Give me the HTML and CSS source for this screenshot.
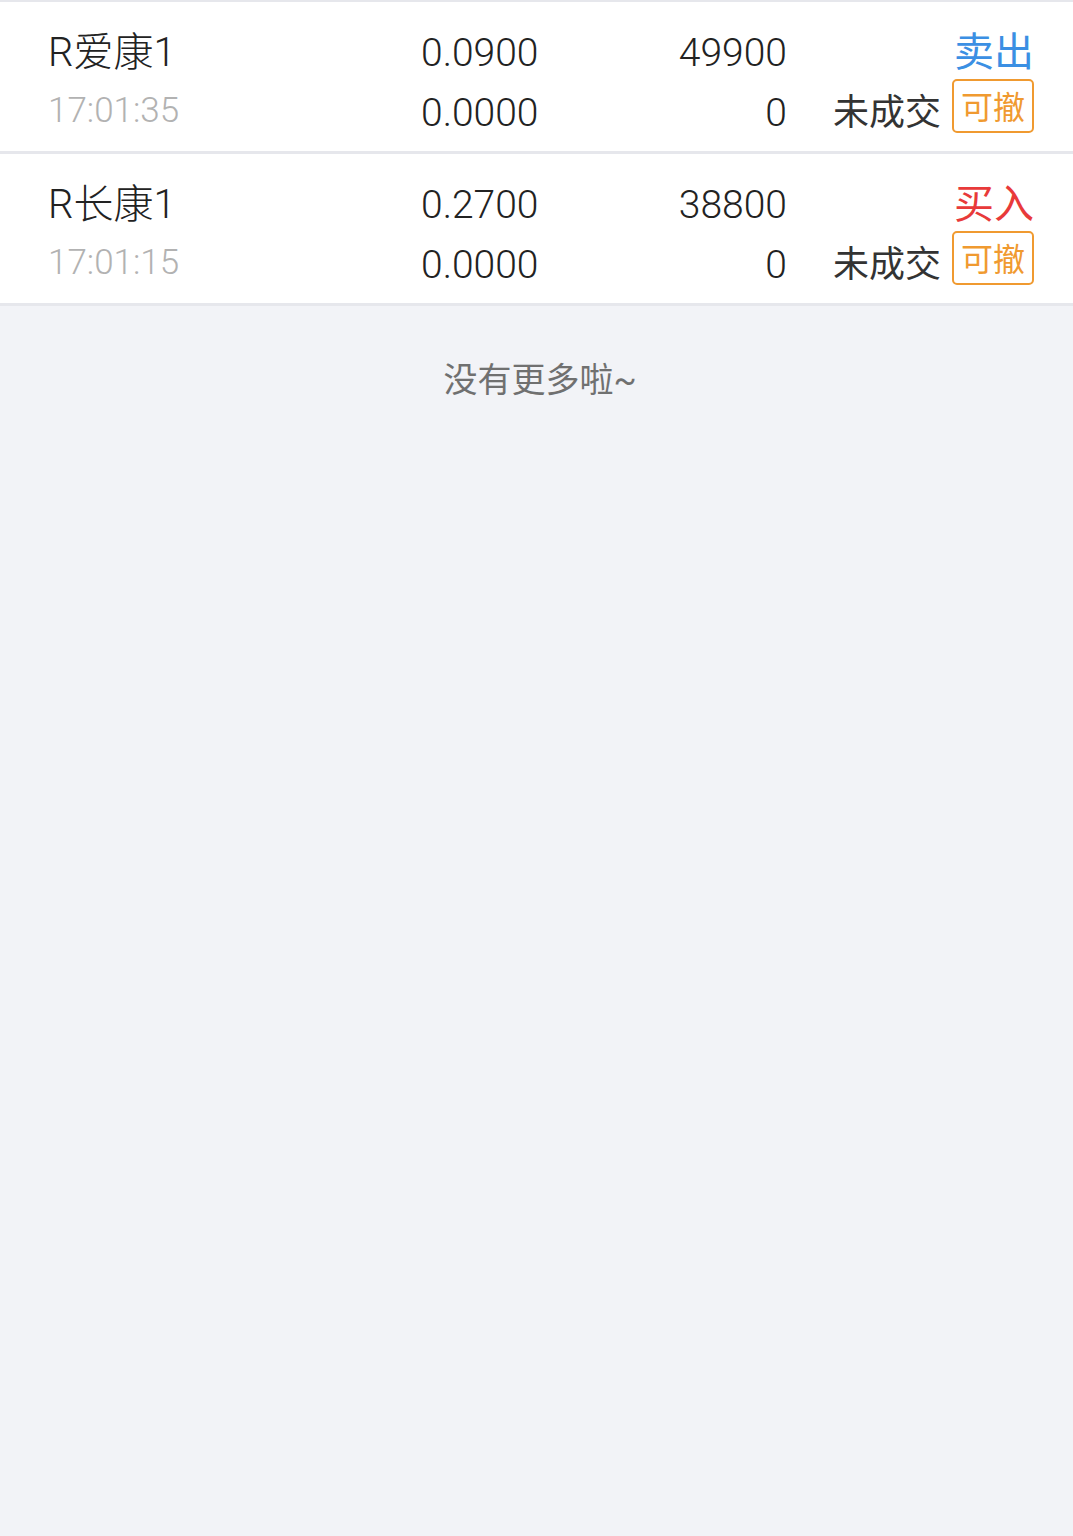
FILE: index.html
```html
<!doctype html>
<html>
<head>
<meta charset="utf-8">
<title>委托</title>
<link rel="stylesheet" href="styles.css">
</head>

<body>
<div id="orders">
	<div class="order">
		<div class="col name">
			<div class="line">R爱康1</div>
			<div class="line time">17:01:35</div>
		</div>
		<div class="col price">
			<div class="line">0.0900</div>
			<div class="line">0.0000</div>
		</div>
		<div class="col qty">
			<div class="line">49900</div>
			<div class="line">0</div>
		</div>
		<div class="col state">
			<div class="line sell">卖出</div>
			<div class="line status">
				<span>未成交</span>
				<span class="cancel">可撤</span>
			</div>
		</div>
	</div>
	<div class="order">
		<div class="col name">
			<div class="line">R长康1</div>
			<div class="line time">17:01:15</div>
		</div>
		<div class="col price">
			<div class="line">0.2700</div>
			<div class="line">0.0000</div>
		</div>
		<div class="col qty">
			<div class="line">38800</div>
			<div class="line">0</div>
		</div>
		<div class="col state">
			<div class="line buy">买入</div>
			<div class="line status">
				<span>未成交</span>
				<span class="cancel">可撤</span>
			</div>
		</div>
	</div>
</div>
<p class="nomore">没有更多啦~</p>
</body>
</html>
```

FILE: styles.css
```css
body {
	margin: 0;
	background: #f2f3f7;
	font-family: "Roboto", "Noto Sans CJK SC", sans-serif;
	color: #222;
}
#orders {
	border-top: 2px solid #e6e7ec;
}
.order {
	display: grid;
	grid-template-columns: 373px 1fr 1fr 247px;
	padding: 21px 39px 8px 48px;
	background: #FFF;
	border-bottom: 3px solid #e6e7ec;
}
.line {
	height: 60px;
	line-height: 60px;
	font-size: 40px;
	white-space: nowrap;
}
.price .line,
.qty .line,
.name .line {
	font-weight: 300;
}
.price .line,
.qty .line {
	font-size: 39px;
}
.name .time {
	font-size: 35px;
	line-height: 56px;
	color: #b2b2b2;
}
.qty,
.state {
	text-align: right;
}
.sell {
	color: #3b8fe3;
}
.buy {
	color: #e83a3a;
}
.status {
	display: flex;
	justify-content: flex-end;
	align-items: center;
	gap: 11px;
	font-size: 36px;
	color: #333;
}
.cancel {
	height: 45px;
	line-height: 45px;
	padding: 5px 7px 0;
	margin-bottom: 14px;
	border: 2px solid #f09a30;
	border-radius: 5px;
	font-size: 32px;
	color: #f09a30;
}
.nomore {
	margin: 49px 0 0;
	padding-left: 7px;
	line-height: 50px;
	font-size: 34px;
	color: #707070;
	text-align: center;
}
```
